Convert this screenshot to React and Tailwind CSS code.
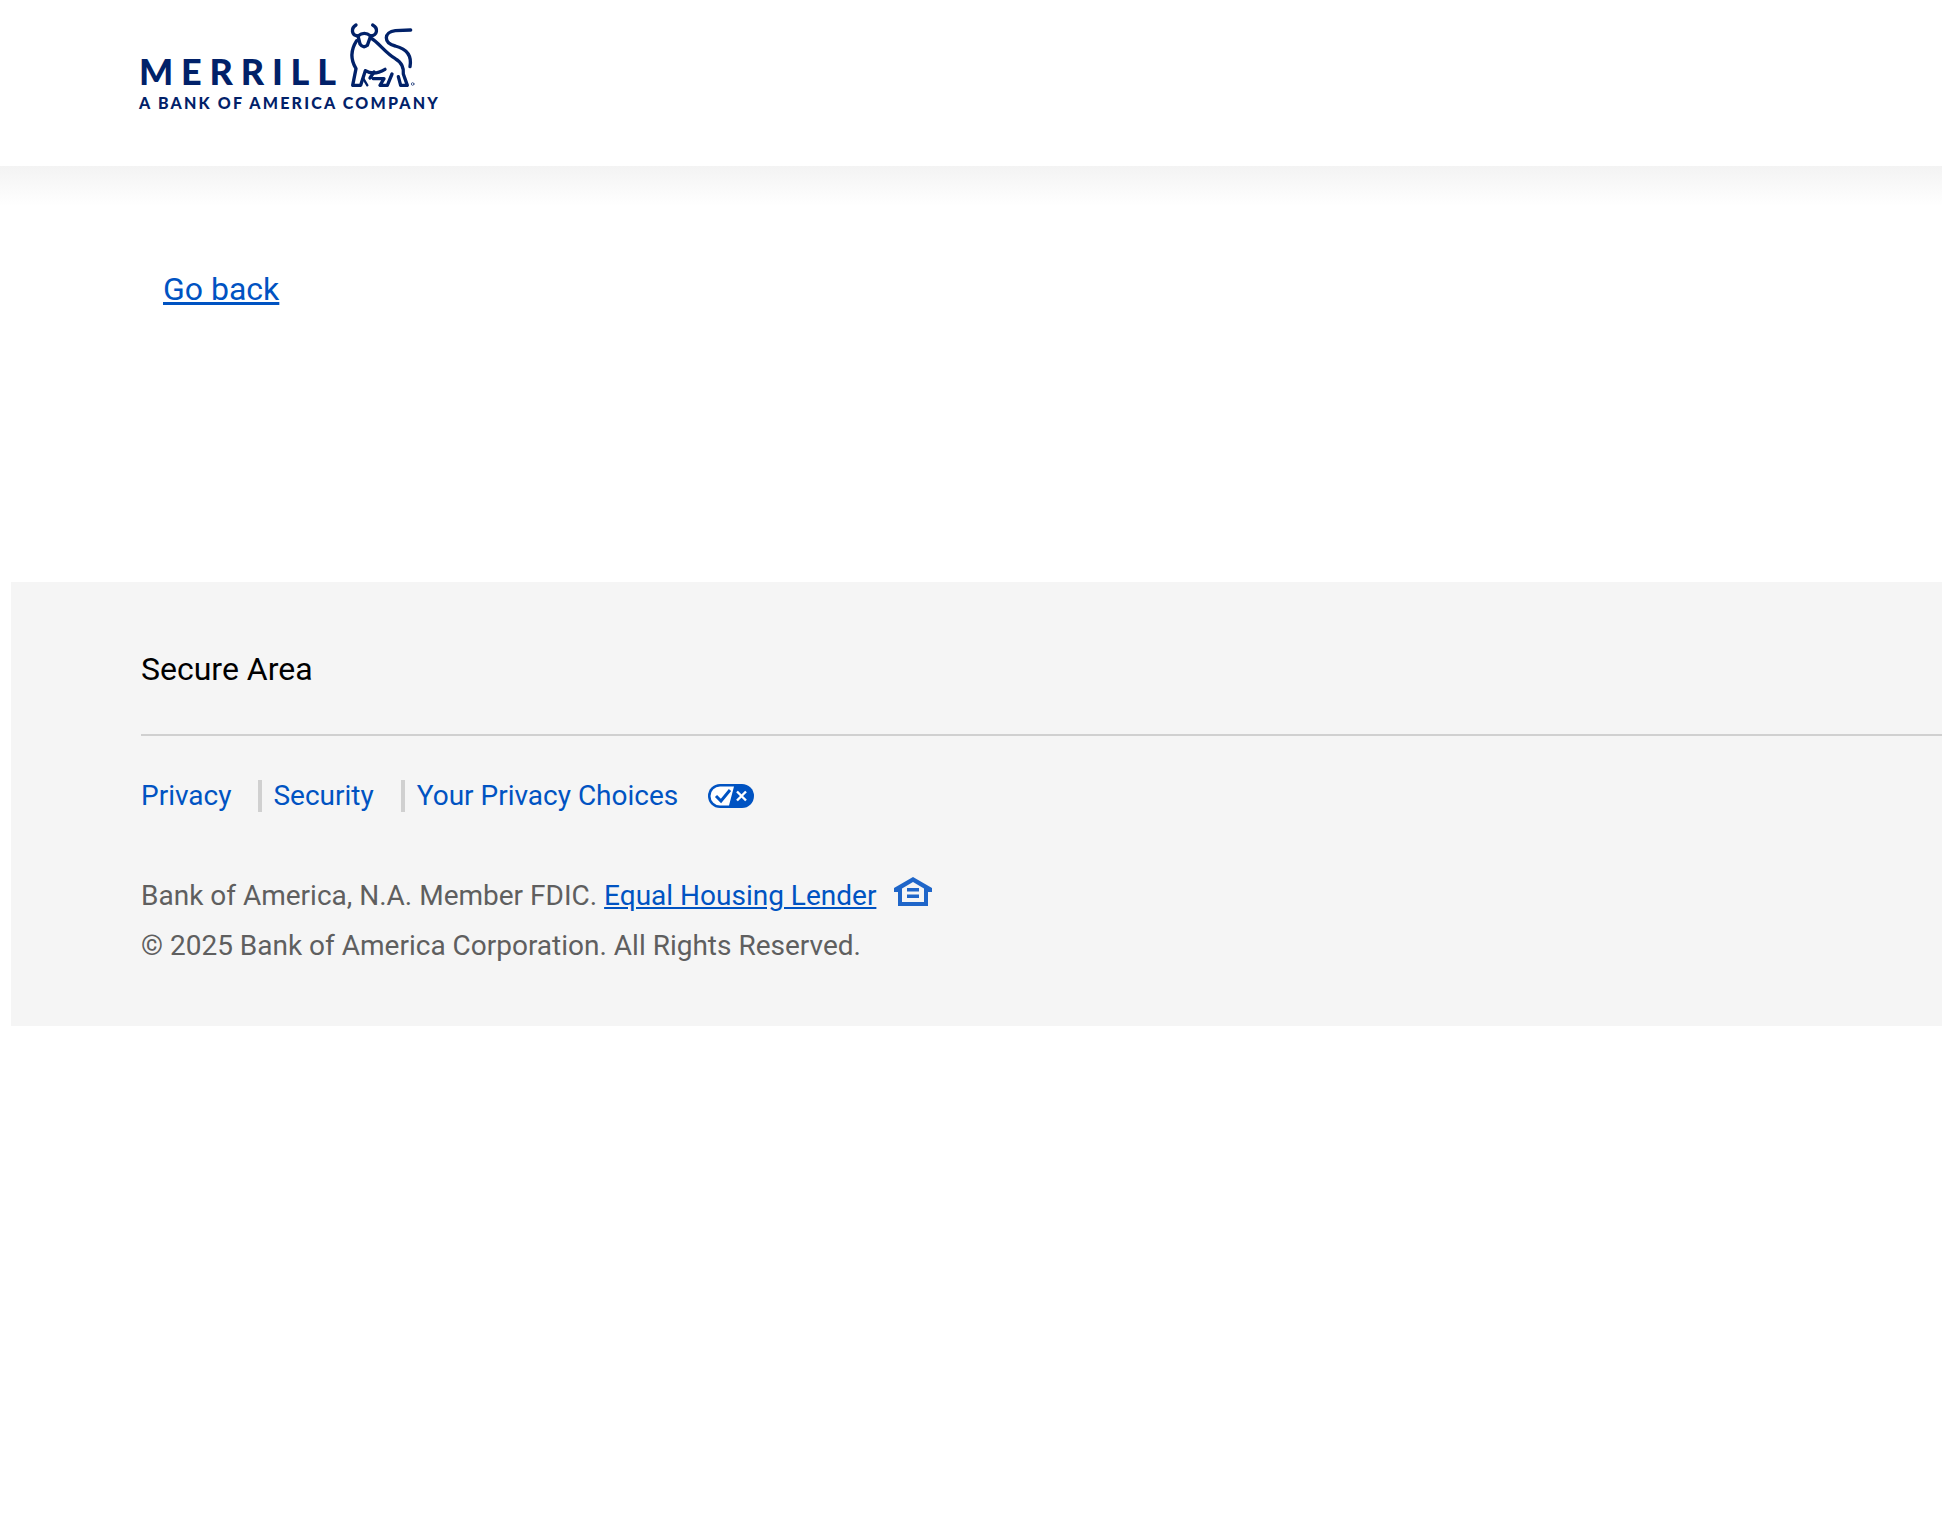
const roboto = { fontFamily: "Roboto, sans-serif" };

function Bull() {
  return (
    <svg viewBox="0 0 300 240" className="w-[100px] h-[80px] absolute left-[191px] top-[-13px]" fill="none" stroke="#012169" strokeWidth="10" strokeLinejoin="round" strokeLinecap="round">
      <path d="M78 45C62 55 64 76 84 78C96 68 110 68 122 78C142 76 146 55 128 45" />
      <path d="M84 78L90 102Q100 116 112 106L122 78" />
      <path d="M80 92C62 120 62 150 78 176L68 226H92L106 182C125 194 145 190 165 178" />
      <path d="M122 84C145 96 165 128 196 146C215 156 222 176 220 192L232 226H212L205 200" />
      <path d="M242 60L196 62C160 66 160 100 196 108C228 116 246 136 240 170" />
      <path d="M120 204L132 186M130 206H162L150 226H172L186 192" />
      <path d="M100 206L112 226" strokeWidth="7" />
      <circle cx="248" cy="222" r="4" strokeWidth="2" />
    </svg>
  );
}

function Logo() {
  return (
    <div className="relative w-[310px] h-[100px] text-[#012169]" style={{ fontFamily: "Lato, sans-serif" }}>
      <Bull />
      <div className="absolute left-0 top-[26px] text-[36px] leading-[44px] font-black tracking-[7.8px]">MERRILL</div>
      <div className="absolute left-0 top-[70px] text-[16px] leading-[20px] font-black tracking-[2.2px] whitespace-nowrap">A BANK OF AMERICA COMPANY</div>
    </div>
  );
}

function PrivacyIcon() {
  return (
    <svg viewBox="0 0 46 24" className="w-[46px] h-[24px]">
      <rect x="0" y="0" width="46" height="24" rx="12" fill="#0053c2" />
      <path d="M12 2.5H26L21 21.5H12A9.5 9.5 0 0 1 12 2.5Z" fill="#fff" />
      <path d="M8 12L13 17L22 6" fill="none" stroke="#0053c2" strokeWidth="3" />
      <path d="M29 7.5L38 16.5M38 7.5L29 16.5" stroke="#fff" strokeWidth="2.4" />
    </svg>
  );
}

function HousingIcon() {
  return (
    <svg viewBox="0 0 40 30" className="w-[40px] h-[30px]">
      <path d="M1 12L20 1L39 12V16H35V30H5V16H1Z" fill="#1f66c9" />
      <path d="M9 12.5L20 6L31 12.5V26H9Z" fill="#f5f5f5" />
      <rect x="14" y="12" width="12" height="3.5" fill="#1f66c9" />
      <rect x="14" y="18.5" width="12" height="3.5" fill="#1f66c9" />
    </svg>
  );
}

export default function App() {
  return (
    <div className="min-h-[1540px] bg-white" style={roboto}>
      <header className="h-[166px] pl-[139px] pt-[23px] bg-white">
        <Logo />
      </header>
      <div className="h-[40px] bg-gradient-to-b from-[#f3f3f3] to-white" />

      <main className="h-[376px] pl-[163px] pt-[61px]">
        <a href="#" className="text-[32px] leading-[44px] text-[#0053c2] underline">Go back</a>
      </main>

      <footer className="ml-[11px] h-[444px] bg-[#f5f5f5] pl-[130px] pt-[64px]">
        <div className="text-[32px] leading-[46px] text-black">Secure Area</div>
        <div className="mt-[42px] h-[2px] bg-[#d0d0d0]" />
        <nav className="mt-[44px] flex items-center text-[28px] leading-[32px] text-[#0053c2]">
          <a href="#">Privacy</a>
          <span className="ml-[27px] mr-[11px] w-[4px] h-[32px] bg-[#d0d0d0]" />
          <a href="#">Security</a>
          <span className="ml-[27px] mr-[12px] w-[4px] h-[32px] bg-[#d0d0d0]" />
          <a href="#">Your Privacy Choices</a>
          <span className="ml-[30px]"><PrivacyIcon /></span>
        </nav>
        <div className="mt-[59px] text-[28px] leading-[50px] text-[#5f5f5f]">
          <div className="flex items-center">
            Bank of America, N.A. Member FDIC.
            <a href="#" className="ml-[7px] text-[#0053c2] underline">Equal Housing Lender</a>
            <span className="ml-[17px] -mt-[10px]"><HousingIcon /></span>
          </div>
          <div>© 2025 Bank of America Corporation. All Rights Reserved.</div>
        </div>
      </footer>
    </div>
  );
}
